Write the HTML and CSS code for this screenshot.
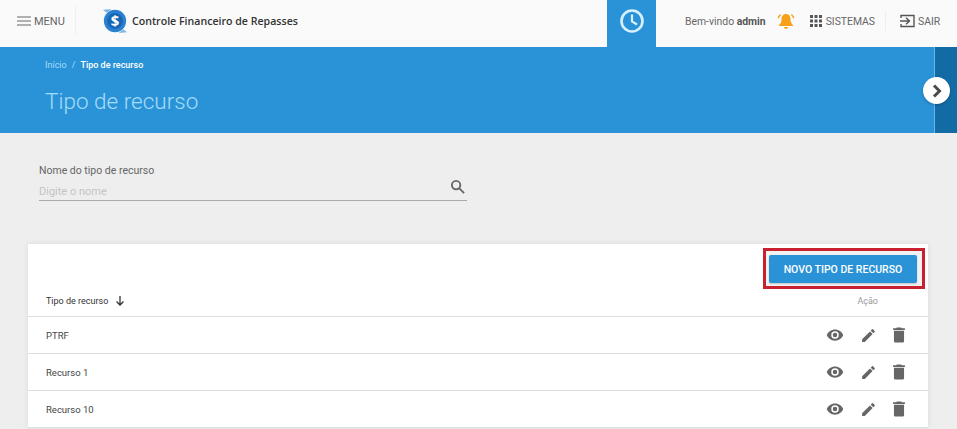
FILE: index.html
```html
<!DOCTYPE html>
<html lang="pt-BR">
<head>
    <meta charset="UTF-8">
    <title>Tipo de recurso</title>
    <link rel="stylesheet" href="styles.css">
</head>
<body>
    <header class="topbar">
        <div class="menu">
            <svg class="menu-icon" viewBox="0 0 14 10" width="14" height="10"><path d="M0 1h14M0 5h14M0 9h14" stroke="#666" stroke-width="1.2"/></svg>
            <span>MENU</span>
        </div>
        <div class="brand">
            <svg class="logo" viewBox="0 0 28 28" width="26" height="26">
                <path d="M5 5 L1 2 L10 1z" fill="#7fb6e6"/>
                <path d="M23 23 L27 26 L18 27z" fill="#7fb6e6"/>
                <circle cx="14" cy="14" r="12" fill="#2b80d2"/>
                <circle cx="14" cy="14" r="8.5" fill="#1766b4"/>
                <text x="14" y="19.5" text-anchor="middle" class="logo-s">$</text>
            </svg>
            <span class="brand-name">Controle Financeiro de Repasses</span>
        </div>
        <div class="clock">
            <svg viewBox="0 0 26 26" width="26" height="26"><circle cx="13" cy="13" r="10.5" fill="none" stroke="#d8f0fc" stroke-width="2.6"/><path d="M13 6.5v7l5 3" fill="none" stroke="#d8f0fc" stroke-width="2.2"/></svg>
        </div>
        <div class="user">
            <span class="welcome">Bem-vindo <b>admin</b></span>
            <svg class="bell" viewBox="0 0 18 18" width="18" height="18">
                <path d="M9 2c3 0 4.5 2.4 4.5 5.2 0 3 1 4.6 2.5 5.8v1H2v-1c1.500-1.200 2.500-2.800 2.500-5.800C4.500 4.400 6 2 9 2z" fill="#f7a11a"/>
                <path d="M7 15h4a2 2 0 0 1-4 0z" fill="#f7a11a"/>
                <path d="M3.500 2.500 1 6M14.500 2.500 17 6" stroke="#f7a11a" stroke-width="1.300" fill="none"/>
            </svg>
            <div class="systems">
                <svg viewBox="0 0 12 12" width="12" height="12" fill="#555"><path d="M0 0h3v3H0zM4.500 0h3v3h-3zM9 0h3v3H9zM0 4.500h3v3H0zM4.500 4.500h3v3h-3zM9 4.500h3v3H9zM0 9h3v3H0zM4.500 9h3v3h-3zM9 9h3v3H9z"/></svg>
                <span>SISTEMAS</span>
            </div>
            <div class="logout">
                <svg viewBox="0 0 15 14" width="15" height="14" fill="none" stroke="#555" stroke-width="1.400"><path d="M1 4V1.500h13v11H1V10"/><path d="M0 7h9M6 3.800 9.500 7 6 10.200"/></svg>
                <span>SAIR</span>
            </div>
        </div>
    </header>

    <section class="banner">
        <div class="breadcrumb"><span class="crumb-link">Início</span><span class="crumb-sep">/</span><b>Tipo de recurso</b></div>
        <h1>Tipo de recurso</h1>
        <div class="side-strip"></div>
        <div class="side-toggle">
            <svg viewBox="0 0 12 14" width="12" height="14"><path d="M3 1.500l5.500 5.500-5.500 5.500" fill="none" stroke="#4a4a4a" stroke-width="3"/></svg>
        </div>
    </section>

    <main class="content">
        <div class="search">
            <label for="nome">Nome do tipo de recurso</label>
            <div class="search-field">
                <input id="nome" type="text" placeholder="Digite o nome">
                <svg viewBox="0 0 16 16" width="15" height="15" fill="none" stroke="#666" stroke-width="2"><circle cx="6.500" cy="6.500" r="4.500"/><path d="M10 10l5 5"/></svg>
            </div>
        </div>

        <div class="card">
            <div class="card-actions">
                <div class="highlight"><button type="button">NOVO TIPO DE RECURSO</button></div>
            </div>
            <div class="row head">
                <div class="name">Tipo de recurso <svg viewBox="0 0 10 10" width="10" height="10" fill="none" stroke="#333" stroke-width="1.300"><path d="M5 0v9M1.500 5.500 5 9l3.500-3.500"/></svg></div>
                <div class="action-title">Ação</div>
            </div>
            <div class="row">
                <div class="name">PTRF</div>
                <div class="icons">
                    <svg width="18" height="12" viewBox="0 2 24 16"><path fill="#666" d="M12 2.500C7 2.500 2.700 5.600 1 10c1.700 4.400 6 7.500 11 7.500s9.300-3.100 11-7.500c-1.700-4.400-6-7.500-11-7.500zm0 12.500a5 5 0 1 1 0-10 5 5 0 0 1 0 10zm0-8a3 3 0 1 0 0 6 3 3 0 0 0 0-6z"/></svg>
                    <svg width="17" height="17" viewBox="0 0 24 24"><path fill="#666" d="M3 17.250V21h3.750L17.810 9.940l-3.750-3.750L3 17.250zM20.710 7.040a1 1 0 0 0 0-1.410l-2.340-2.340a1 1 0 0 0-1.410 0l-1.830 1.830 3.750 3.750 1.830-1.830z"/></svg>
                    <svg width="14" height="16" viewBox="4 2.500 16 19"><path fill="#666" d="M6 19c0 1.100.9 2 2 2h8c1.100 0 2-.9 2-2V7H6v12zM19 4h-3.500l-1-1h-5l-1 1H5v2h14V4z"/></svg>
                </div>
            </div>
            <div class="row">
                <div class="name">Recurso 1</div>
                <div class="icons">
                    <svg width="18" height="12" viewBox="0 2 24 16"><path fill="#666" d="M12 2.500C7 2.500 2.700 5.600 1 10c1.700 4.400 6 7.500 11 7.500s9.300-3.100 11-7.500c-1.700-4.400-6-7.500-11-7.500zm0 12.500a5 5 0 1 1 0-10 5 5 0 0 1 0 10zm0-8a3 3 0 1 0 0 6 3 3 0 0 0 0-6z"/></svg>
                    <svg width="17" height="17" viewBox="0 0 24 24"><path fill="#666" d="M3 17.250V21h3.750L17.810 9.940l-3.750-3.750L3 17.250zM20.710 7.040a1 1 0 0 0 0-1.410l-2.340-2.340a1 1 0 0 0-1.410 0l-1.830 1.830 3.750 3.750 1.830-1.830z"/></svg>
                    <svg width="14" height="16" viewBox="4 2.500 16 19"><path fill="#666" d="M6 19c0 1.100.9 2 2 2h8c1.100 0 2-.9 2-2V7H6v12zM19 4h-3.500l-1-1h-5l-1 1H5v2h14V4z"/></svg>
                </div>
            </div>
            <div class="row">
                <div class="name">Recurso 10</div>
                <div class="icons">
                    <svg width="18" height="12" viewBox="0 2 24 16"><path fill="#666" d="M12 2.500C7 2.500 2.700 5.600 1 10c1.700 4.400 6 7.500 11 7.500s9.300-3.100 11-7.500c-1.700-4.400-6-7.500-11-7.500zm0 12.500a5 5 0 1 1 0-10 5 5 0 0 1 0 10zm0-8a3 3 0 1 0 0 6 3 3 0 0 0 0-6z"/></svg>
                    <svg width="17" height="17" viewBox="0 0 24 24"><path fill="#666" d="M3 17.250V21h3.750L17.810 9.940l-3.750-3.750L3 17.250zM20.710 7.040a1 1 0 0 0 0-1.410l-2.340-2.340a1 1 0 0 0-1.410 0l-1.830 1.830 3.750 3.750 1.830-1.830z"/></svg>
                    <svg width="14" height="16" viewBox="4 2.500 16 19"><path fill="#666" d="M6 19c0 1.100.9 2 2 2h8c1.100 0 2-.9 2-2V7H6v12zM19 4h-3.500l-1-1h-5l-1 1H5v2h14V4z"/></svg>
                </div>
            </div>
        </div>
    </main>
</body>
</html>
```

FILE: styles.css
```css
html, body {
    height: 100%;
    overflow: hidden;
}

body {
    margin: 0;
    background-color: #eeeeee;
    font-family: Roboto, "Liberation Sans", sans-serif;
    color: #555;
}

svg {
    display: block;
    flex: none;
}

/* top bar */
.topbar {
    display: flex;
    align-items: center;
    height: 47px;
    background-color: #fafafa;
}

.menu, .brand, .user {
    margin-bottom: 5px;
}

.menu {
    display: flex;
    align-items: center;
    gap: 3px;
    width: 76px;
    height: 30px;
    padding-left: 17px;
    box-sizing: border-box;
    border-right: 1px solid #f0f0f0;
    font-size: 11px;
    color: #666;
}

.brand {
    display: flex;
    align-items: center;
    gap: 4px;
    width: 531px;
    padding-left: 26px;
    box-sizing: border-box;
}

.logo-s {
    font-family: "Open Sans", sans-serif;
    font-size: 16px;
    font-weight: 700;
    fill: #fff;
}

.brand-name {
    font-family: "Open Sans", sans-serif;
    font-size: 10.600px;
    font-weight: 600;
    color: #333;
}

.clock {
    display: flex;
    align-items: center;
    justify-content: center;
    width: 49px;
    height: 47px;
    padding-bottom: 5px;
    box-sizing: border-box;
    background-color: #2a93d8;
}

.user {
    display: flex;
    flex: 1;
    align-items: center;
    padding-left: 29px;
    font-size: 10.400px;
    color: #666;
}

.welcome b {
    color: #555;
}

.bell {
    margin-left: 11px;
}

.systems {
    display: flex;
    align-items: center;
    gap: 4px;
    height: 20px;
    margin-left: 15px;
    padding-right: 10px;
    border-right: 1px solid #eee;
}

.logout {
    display: flex;
    align-items: center;
    gap: 3px;
    margin-left: 14px;
}

/* blue banner */
.banner {
    position: relative;
    height: 86px;
    padding-left: 45px;
    box-sizing: border-box;
    background-color: #2a93d8;
    overflow: visible;
}

.breadcrumb {
    padding-top: 13px;
    font-size: 9px;
    line-height: 11px;
    color: #a5dcf8;
}

.breadcrumb b {
    font-weight: 500;
    color: #fff;
}

.crumb-sep {
    margin: 0 5px;
}

.banner h1 {
    margin: 15px 0 0;
    font-size: 22.500px;
    font-weight: 300;
    line-height: 30px;
    color: #a5dcf8;
}

.side-strip {
    position: absolute;
    top: 0;
    right: 0;
    bottom: 0;
    width: 22px;
    border-left: 1px solid #6ab4e6;
    background-color: #136ba6;
}

.side-toggle {
    position: absolute;
    top: 30px;
    right: 7px;
    display: flex;
    align-items: center;
    justify-content: center;
    width: 27px;
    height: 27px;
    border-radius: 50%;
    background-color: #fff;
    box-shadow: 0 1px 3px rgba(0, 0, 0, 0.25);
}

/* content */
.content {
    padding: 31px 29px 0 28px;
}

.search {
    width: 428px;
    margin-left: 11px;
}

.search label {
    display: block;
    font-size: 10.500px;
    line-height: 13px;
    color: #666;
}

.search-field {
    display: flex;
    align-items: center;
    height: 23px;
    border-bottom: 1px solid #aaa;
}

.search-field input {
    flex: 1;
    min-width: 0;
    padding: 6px 0 0;
    border: none;
    outline: none;
    background: transparent;
    font-family: inherit;
    font-size: 11px;
}

.search-field input::placeholder {
    color: #c4c4c4;
}

.search-field svg {
    margin: 0 2px 5px 0;
}

.card {
    margin-top: 43px;
    background-color: #fff;
    box-shadow: 0 0 6px rgba(0, 0, 0, 0.08);
}

.card-actions {
    display: flex;
    justify-content: flex-end;
    height: 45px;
    padding: 4px 3px 0 0;
    box-sizing: border-box;
}

.highlight {
    width: 162px;
    height: 41px;
    padding: 4px 3px;
    box-sizing: border-box;
    border: 3px solid #c8202e;
    background-color: #f2f2f2;
}

.highlight button {
    display: block;
    width: 148px;
    height: 28px;
    padding: 0;
    border: none;
    border-radius: 2px;
    background-color: #2a93d8;
    box-shadow: 0 1px 2px rgba(0, 0, 0, 0.2);
    font-family: inherit;
    font-size: 10.500px;
    font-weight: 500;
    color: #fff;
}

.row {
    display: flex;
    align-items: center;
    justify-content: space-between;
    height: 37px;
    padding: 0 22px 0 18px;
    box-sizing: border-box;
    border-bottom: 1px solid #ddd;
    font-size: 9.500px;
    color: #444;
}

.row.head {
    height: 28px;
    padding-bottom: 3px;
    font-size: 9px;
    color: #333;
}

.head .name {
    display: flex;
    align-items: center;
    gap: 7px;
}

.action-title {
    margin-right: 28px;
    color: #999;
}

.icons {
    display: flex;
    align-items: center;
    gap: 15px;
}

.icons svg:first-child {
    margin-right: 1px;
}
```
